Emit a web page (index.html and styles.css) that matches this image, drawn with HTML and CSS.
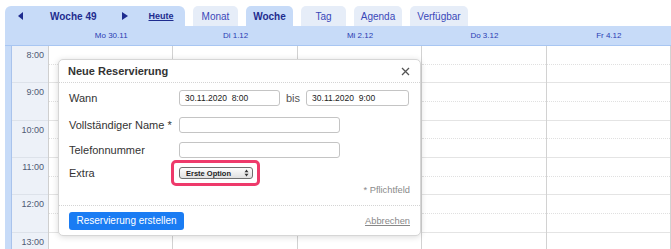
FILE: index.html
```html
<!DOCTYPE html>
<html lang="de">
<head>
<meta charset="utf-8">
<title>Neue Reservierung</title>
<link rel="stylesheet" href="styles.css">
</head>
<body>
<div class="cal">
  <div class="topbar">
    <div class="nav">
      <svg class="tri prev" width="5" height="8" viewBox="0 0 5 8"><polygon points="5,0 0,4 5,8"/></svg>
      <span class="week">Woche 49</span>
      <svg class="tri next" width="6" height="8" viewBox="0 0 6 8"><polygon points="0,0 6,4 0,8"/></svg>
      <span class="today">Heute</span>
    </div>
    <div class="tab t-monat">Monat</div>
    <div class="tab t-woche active">Woche</div>
    <div class="tab t-tag">Tag</div>
    <div class="tab t-agenda">Agenda</div>
    <div class="tab t-verf">Verfügbar</div>
  </div>
  <div class="dayhead">
    <div></div>
    <div class="dh">Mo 30.11</div>
    <div class="dh">Di 1.12</div>
    <div class="dh">Mi 2.12</div>
    <div class="dh">Do 3.12</div>
    <div class="dh">Fr 4.12</div>
  </div>
  <div class="grid">
    <div class="timecol">
      <div class="hour">8:00</div>
      <div class="hour">9:00</div>
      <div class="hour">10:00</div>
      <div class="hour">11:00</div>
      <div class="hour">12:00</div>
      <div class="hour">13:00</div>
    </div>
    <div class="day"><div class="slot"></div><div class="slot"></div><div class="slot"></div><div class="slot"></div><div class="slot"></div><div class="slot"></div><div class="slot"></div><div class="slot"></div><div class="slot"></div><div class="slot"></div><div class="slot"></div><div class="slot"></div></div>
    <div class="day"><div class="slot"></div><div class="slot"></div><div class="slot"></div><div class="slot"></div><div class="slot"></div><div class="slot"></div><div class="slot"></div><div class="slot"></div><div class="slot"></div><div class="slot"></div><div class="slot"></div><div class="slot"></div></div>
    <div class="day"><div class="slot"></div><div class="slot"></div><div class="slot"></div><div class="slot"></div><div class="slot"></div><div class="slot"></div><div class="slot"></div><div class="slot"></div><div class="slot"></div><div class="slot"></div><div class="slot"></div><div class="slot"></div></div>
    <div class="day"><div class="slot"></div><div class="slot"></div><div class="slot"></div><div class="slot"></div><div class="slot"></div><div class="slot"></div><div class="slot"></div><div class="slot"></div><div class="slot"></div><div class="slot"></div><div class="slot"></div><div class="slot"></div></div>
    <div class="day"><div class="slot"></div><div class="slot"></div><div class="slot"></div><div class="slot"></div><div class="slot"></div><div class="slot"></div><div class="slot"></div><div class="slot"></div><div class="slot"></div><div class="slot"></div><div class="slot"></div><div class="slot"></div></div>
  </div>
</div>

<div class="dialog">
  <div class="dlg-head">
    <span class="dlg-title">Neue Reservierung</span>
    <svg class="close" width="9" height="9" viewBox="0 0 9 9"><path d="M1 1 L8 8 M8 1 L1 8"/></svg>
  </div>
  <div class="form">
    <div class="row r1">
      <span class="lbl">Wann</span>
      <input class="in in-date" type="text" value="30.11.2020  8:00">
      <span class="bis">bis</span>
      <input class="in in-date2" type="text" value="30.11.2020  9:00">
    </div>
    <div class="row r2">
      <span class="lbl">Vollständiger Name *</span>
      <input class="in in-long" type="text" value="">
    </div>
    <div class="row r3">
      <span class="lbl">Telefonnummer</span>
      <input class="in in-long" type="text" value="">
    </div>
    <div class="row r4">
      <span class="lbl">Extra</span>
      <span class="selwrap">
        <span class="select">Erste Option
          <svg class="arrows" width="5" height="8" viewBox="0 0 5 8"><polygon points="0.5,3.3 2.5,0.6 4.5,3.3"/><polygon points="0.5,4.7 2.5,7.4 4.5,4.7"/></svg>
        </span>
        <span class="ring"></span>
      </span>
    </div>
  </div>
  <div class="hint">* Pflichtfeld</div>
  <div class="dlg-foot">
    <span class="btn">Reservierung erstellen</span>
    <span class="cancel">Abbrechen</span>
  </div>
</div>
</body>
</html>
```
FILE: styles.css
```css
* { box-sizing: border-box; }
html, body {
  margin: 0;
  height: 249px;
  overflow: hidden;
  background: #fff;
}
body {
  font-family: "Liberation Sans", Arial, sans-serif;
  position: relative;
}

.cal {
  margin: 6px 0 0 5px;
  width: 666px;
  height: 243px;
  overflow: hidden;
}

/* top bar */
.topbar {
  display: flex;
  height: 20px;
  gap: 8px;
}
.nav {
  width: 180px;
  background: #c7dbf8;
  border-radius: 6px 6px 0 0;
  display: flex;
  align-items: center;
  padding-left: 13px;
  color: #1e2c8f;
  font-weight: bold;
  font-size: 10px;
}
.tri { fill: #1e2c8f; display: block; }
.prev { margin-right: 27px; }
.week { margin-right: 25px; }
.next { margin-right: 21px; }
.today {
  font-size: 9px;
  text-decoration: underline;
}
.tab {
  background: #e6edf8;
  border-radius: 5px 5px 0 0;
  color: #3a48b8;
  font-size: 10px;
  display: flex;
  align-items: center;
  justify-content: center;
  padding-top: 1px;
}
.tab.active {
  background: #c7dbf8;
  font-weight: bold;
  color: #1e2c8f;
}
.t-monat { width: 45px; }
.t-woche { width: 47px; }
.t-tag { width: 45px; }
.t-agenda { width: 48px; }
.t-verf { width: 58px; }

/* day header */
.dayhead {
  display: grid;
  grid-template-columns: 38px repeat(5, 1fr);
  padding-left: 6px;
  height: 20px;
  background: #c7dbf8;
  border-bottom: 1px solid #a8c6f2;
}
.dh {
  font-size: 8px;
  line-height: 20px;
  color: #2b3bb3;
  text-align: center;
}

/* grid */
.grid {
  display: grid;
  grid-template-columns: 38px repeat(5, 1fr);
  padding-left: 6px;
  background: #c7dbf8;
}
.timecol {
  background: #edf1f8;
  border-left: 1px solid #a9c3ec;
  border-right: 1px solid #cfcfcf;
}
.hour {
  height: 37.333px;
  border-bottom: 1px solid #dde2ea;
  text-align: right;
  padding: 4px 4px 0 0;
  font-size: 9px;
  line-height: 11px;
  color: #4d5a75;
}
.day {
  background: #fff;
  border-right: 1px solid #d2d2d2;
}
.slot {
  height: 18.667px;
  border-bottom: 1px dotted #e0e0e0;
}
.slot:nth-child(even) {
  border-bottom: 1px solid #e4e4e4;
}

/* dialog */
.dialog {
  position: absolute;
  left: 58px;
  top: 59px;
  width: 363px;
  height: 177px;
  background: #fff;
  border: 1px solid #d6d6d6;
  border-radius: 5px;
  box-shadow: 0 1px 6px rgba(0, 0, 0, 0.15);
  display: flex;
  flex-direction: column;
  color: #333;
}
.dlg-head {
  height: 23px;
  border-bottom: 1px dotted #d4d4d4;
  display: flex;
  align-items: center;
  justify-content: space-between;
  padding: 0 10px 0 9px;
}
.dlg-title {
  font-weight: bold;
  font-size: 11px;
  color: #333;
}
.close { display: block; stroke: #555; stroke-width: 1.3; }

.form {
  padding: 7px 10px 0 10px;
}
.row {
  display: flex;
  align-items: center;
  height: 16px;
}
.r2 { margin-top: 10.5px; }
.r3 { margin-top: 9.8px; }
.r4 { margin-top: 7px; }
.lbl {
  width: 110px;
  font-size: 11px;
  color: #333;
}
.in {
  height: 16px;
  border: 1px solid #c4c4c4;
  border-radius: 3px;
  font-family: "Liberation Sans", Arial, sans-serif;
  font-size: 8.5px;
  padding: 0 5px;
  color: #222;
  background: #fff;
  margin: 0;
  outline: none;
}
.in-date { width: 101px; }
.in-date2 { width: 103px; }
.in-long { width: 161px; }
.bis {
  font-size: 11px;
  color: #555;
  margin: 0 6px 0 6px;
}

.selwrap {
  position: relative;
  display: block;
}
.select {
  display: flex;
  align-items: center;
  justify-content: space-between;
  width: 74px;
  height: 12px;
  border: 1px solid #6f6f6f;
  border-radius: 3px;
  background: linear-gradient(#fdfdfd, #e0e0e0);
  font-size: 7.5px;
  font-weight: bold;
  color: #222;
  padding: 0 3px 0 6px;
}
.arrows { fill: #333; display: block; }
.ring {
  position: absolute;
  top: -7px;
  bottom: -7px;
  left: -8px;
  right: -7px;
  border: 3px solid #ee3a6b;
  border-radius: 5px;
}

.hint {
  margin-top: 3px;
  padding: 0 10px;
  text-align: right;
  font-size: 9.3px;
  line-height: 12px;
  color: #8a8a8a;
}

.dlg-foot {
  margin-top: auto;
  height: 30px;
  border-top: 1px dotted #d4d4d4;
  display: flex;
  align-items: center;
  justify-content: space-between;
  padding: 0 10px;
}
.btn {
  width: 115px;
  height: 18px;
  background: #1a7cf3;
  border-radius: 3px;
  color: #fff;
  font-size: 10px;
  display: flex;
  align-items: center;
  justify-content: center;
}
.cancel {
  font-size: 9.3px;
  color: #888;
  text-decoration: underline;
}
```
